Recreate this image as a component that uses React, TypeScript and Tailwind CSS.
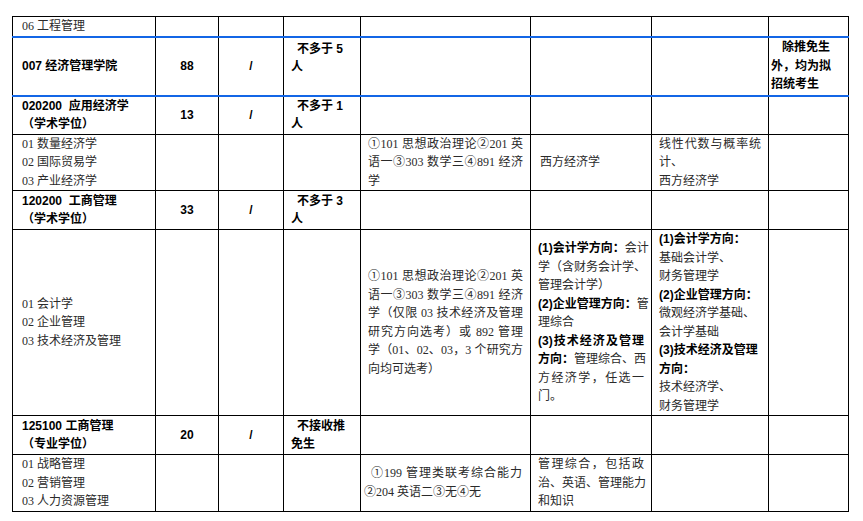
import type { ReactNode } from "react";

const reg = "font-['Liberation_Serif','Noto_Sans_CJK_SC',serif] font-normal text-[#2a2a2a]";
const bold = "font-['Liberation_Sans','Noto_Sans_CJK_SC',sans-serif] font-bold text-black";
const td = "border border-black p-0 align-middle text-[12px] leading-[18.5px]";
const blue = "border-t-2 border-t-[#1366e6]";

// one line of text; j = stretch to the cell width like the source document
function L({ children, j, className = "" }: { children?: ReactNode; j?: boolean; className?: string }) {
  return <div className={`${j ? "text-justify [text-align-last:justify]" : ""} whitespace-nowrap ${className}`}>{children}</div>;
}

function B({ children }: { children: ReactNode }) {
  return <span className={bold}>{children}</span>;
}

export default function App() {
  return (
    <div className="w-[863px] h-[521px] bg-white pt-4 pl-3">
      <table className="table-fixed border-collapse w-[836px]">
        <colgroup>
          <col className="w-[143px]" />
          <col className="w-[63px]" />
          <col className="w-[65px]" />
          <col className="w-[77px]" />
          <col className="w-[170px]" />
          <col className="w-[121px]" />
          <col className="w-[117px]" />
          <col className="w-[80px]" />
        </colgroup>
        <tbody>
          <tr className="h-[17px]">
            <td className={`${td} ${reg} pl-[9px]`}>06 工程管理</td>
            <td className={td} /><td className={td} /><td className={td} /><td className={td} />
            <td className={td} /><td className={td} /><td className={td} />
          </tr>

          <tr className="h-[59px]">
            <td className={`${td} ${blue} ${bold} pl-[9px]`}>007 经济管理学院</td>
            <td className={`${td} ${blue} ${bold} text-center`}>88</td>
            <td className={`${td} ${blue} ${bold} text-center`}>/</td>
            <td className={`${td} ${blue} ${bold} align-top pl-[7px] pt-[2px]`}>
              <L className="pl-[6px]">不多于 5</L>
              <L>人</L>
            </td>
            <td className={`${td} ${blue}`} /><td className={`${td} ${blue}`} /><td className={`${td} ${blue}`} />
            <td className={`${td} ${blue} ${bold} pl-[2px]`}>
              <L className="pl-[11px]">除推免生</L>
              <L>外，均为拟</L>
              <L>招统考生</L>
            </td>
          </tr>

          <tr className="h-[38px]">
            <td className={`${td} ${blue} ${bold} pl-[9px]`}>
              <L>020200&nbsp; 应用经济学</L>
              <L>（学术学位）</L>
            </td>
            <td className={`${td} ${blue} ${bold} text-center`}>13</td>
            <td className={`${td} ${blue} ${bold} text-center`}>/</td>
            <td className={`${td} ${blue} ${bold} pl-[7px]`}>
              <L className="pl-[6px]">不多于 1</L>
              <L>人</L>
            </td>
            <td className={`${td} ${blue}`} /><td className={`${td} ${blue}`} /><td className={`${td} ${blue}`} /><td className={`${td} ${blue}`} />
          </tr>

          <tr className="h-[56px]">
            <td className={`${td} ${reg} pl-[9px]`}>
              <L>01 数量经济学</L>
              <L>02 国际贸易学</L>
              <L>03 产业经济学</L>
            </td>
            <td className={td} /><td className={td} /><td className={td} />
            <td className={`${td} ${reg} px-[7px]`}>
              <L j>①101 思想政治理论②201 英</L>
              <L j>语一③303 数学三④891 经济</L>
              <L>学</L>
            </td>
            <td className={`${td} ${reg} px-[9px]`}>西方经济学</td>
            <td className={`${td} ${reg} px-[7px]`}>
              <L j>线性代数与概率统</L>
              <L>计、</L>
              <L>西方经济学</L>
            </td>
            <td className={td} />
          </tr>

          <tr className="h-[39px]">
            <td className={`${td} ${bold} pl-[9px]`}>
              <L>120200&nbsp; 工商管理</L>
              <L>（学术学位）</L>
            </td>
            <td className={`${td} ${bold} text-center`}>33</td>
            <td className={`${td} ${bold} text-center`}>/</td>
            <td className={`${td} ${bold} pl-[7px]`}>
              <L className="pl-[6px]">不多于 3</L>
              <L>人</L>
            </td>
            <td className={td} /><td className={td} /><td className={td} /><td className={td} />
          </tr>

          <tr className="h-[186px]">
            <td className={`${td} ${reg} pl-[9px]`}>
              <L>01 会计学</L>
              <L>02 企业管理</L>
              <L>03 技术经济及管理</L>
            </td>
            <td className={td} /><td className={td} /><td className={td} />
            <td className={`${td} ${reg} px-[7px]`}>
              <L j>①101 思想政治理论②201 英</L>
              <L j>语一③303 数学三④891 经济</L>
              <L j>学（仅限 03 技术经济及管理</L>
              <L j>研究方向选考）或 892 管理</L>
              <L j>学（01、02、03，3 个研究方</L>
              <L>向均可选考）</L>
            </td>
            <td className={`${td} ${reg} px-[7px]`}>
              <L j><B>(1)会计学方向：</B>会计</L>
              <L j>学（含财务会计学、</L>
              <L>管理会计学）</L>
              <L j><B>(2)企业管理方向：</B>管</L>
              <L>理综合</L>
              <L j><B>(3)技术经济及管理</B></L>
              <L j><B>方向：</B>管理综合、西</L>
              <L j>方经济学，任选一</L>
              <L>门。</L>
            </td>
            <td className={`${td} ${reg} px-[7px]`}>
              <L><B>(1)会计学方向：</B></L>
              <L>基础会计学、</L>
              <L>财务管理学</L>
              <L><B>(2)企业管理方向：</B></L>
              <L>微观经济学基础、</L>
              <L>会计学基础</L>
              <L><B>(3)技术经济及管理</B></L>
              <L><B>方向：</B></L>
              <L>技术经济学、</L>
              <L>财务管理学</L>
            </td>
            <td className={td} />
          </tr>

          <tr className="h-[39px]">
            <td className={`${td} ${bold} pl-[9px]`}>
              <L>125100 工商管理</L>
              <L>（专业学位）</L>
            </td>
            <td className={`${td} ${bold} text-center`}>20</td>
            <td className={`${td} ${bold} text-center`}>/</td>
            <td className={`${td} ${bold} pl-[7px]`}>
              <L className="pl-[6px]">不接收推</L>
              <L>免生</L>
            </td>
            <td className={td} /><td className={td} /><td className={td} /><td className={td} />
          </tr>

          <tr className="h-[56px]">
            <td className={`${td} ${reg} pl-[9px]`}>
              <L>01 战略管理</L>
              <L>02 营销管理</L>
              <L>03 人力资源管理</L>
            </td>
            <td className={td} /><td className={td} /><td className={td} />
            <td className={`${td} ${reg} pl-[3px] pr-[8px]`}>
              <L j className="pl-[7px]">①199 管理类联考综合能力</L>
              <L>②204 英语二③无④无</L>
            </td>
            <td className={`${td} ${reg} px-[7px]`}>
              <L j>管理综合，包括政</L>
              <L j>治、英语、管理能力</L>
              <L>和知识</L>
            </td>
            <td className={td} /><td className={td} />
          </tr>
        </tbody>
      </table>
    </div>
  );
}
